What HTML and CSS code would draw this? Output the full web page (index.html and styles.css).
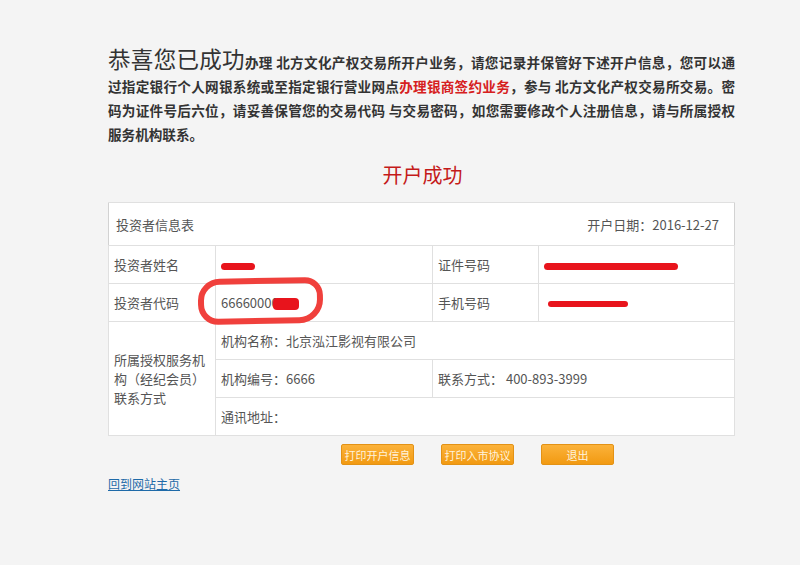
FILE: index.html
```html
<!DOCTYPE html>
<html lang="zh-CN">
<head>
    <meta charset="UTF-8">
    <title>开户成功</title>
    <link rel="stylesheet" href="styles.css">
</head>
<body>
    <div class="page">
        <p class="intro">
            <span class="intro-big">恭喜您已成功</span>办理 北方文化产权交易所开户业务，请您记录并保管好下述开户信息，您可以通过指定银行个人网银系统或至指定银行营业网点<span class="hl">办理银商签约业务</span>，参与 北方文化产权交易所交易。密码为证件号后六位，请妥善保管您的交易代码 与交易密码，如您需要修改个人注册信息，请与所属授权服务机构联系。
        </p>

        <h2 class="title">开户成功</h2>

        <table class="info">
            <colgroup>
                <col class="col1">
                <col class="col2">
                <col class="col3">
                <col class="col4">
            </colgroup>
            <tr class="info-head">
                <td colspan="2">投资者信息表</td>
                <td colspan="2" class="right">开户日期：2016-12-27</td>
            </tr>
            <tr>
                <td>投资者姓名</td>
                <td><span class="blot blot-name"></span></td>
                <td>证件号码</td>
                <td><span class="blot blot-id"></span></td>
            </tr>
            <tr>
                <td>投资者代码</td>
                <td class="mark-cell">66660000<span class="blot blot-code"></span><span class="circle"></span></td>
                <td>手机号码</td>
                <td><span class="blot blot-phone"></span></td>
            </tr>
            <tr>
                <td rowspan="3" class="multi">所属授权服务机构（经纪会员）联系方式</td>
                <td colspan="3">机构名称：北京泓江影视有限公司</td>
            </tr>
            <tr>
                <td>机构编号：6666</td>
                <td colspan="2">联系方式： 400-893-3999</td>
            </tr>
            <tr>
                <td colspan="3">通讯地址：</td>
            </tr>
        </table>

        <div class="actions">
            <button type="button" class="btn">打印开户信息</button>
            <button type="button" class="btn">打印入市协议</button>
            <button type="button" class="btn">退出</button>
        </div>

        <a href="#" class="home">回到网站主页</a>
    </div>
</body>
</html>
```

FILE: styles.css
```css
body {
    margin: 0;
    background: #f4f4f4;
    font-family: "Noto Sans CJK SC", "Liberation Sans", sans-serif;
    color: #555;
}
.page {
    width: 627px;
    margin-left: 108px;
    padding-top: 48px;
}
.intro {
    margin: 0;
    font-size: 13.6px;
    line-height: 24px;
    font-weight: bold;
    color: #333;
    text-align: justify;
}
.intro-big {
    font-size: 22.5px;
    line-height: 20px;
    font-weight: normal;
    color: #333;
}
.hl {
    color: #d62020;
}
.title {
    margin: 14px 0 0;
    text-align: center;
    font-size: 20px;
    line-height: 30px;
    font-weight: normal;
    color: #c41a1a;
    padding-left: 2px;
}
.info {
    margin-top: 12px;
    width: 627px;
    border-collapse: collapse;
    background: #fff;
    border: 1px solid #d2d2d2;
    font-size: 13px;
    table-layout: fixed;
}
.col1 { width: 107px; }
.col2 { width: 217px; }
.col3 { width: 106px; }
.info td {
    border: 1px solid #e0e0e0;
    height: 37px;
    padding: 0 5px;
    color: #555;
}
.info-head td {
    height: 42px;
    border-left: none;
    border-right: none;
    padding: 0 7px;
}
.info-head .right {
    text-align: right;
    padding-right: 15px;
}
.multi {
    line-height: 19px;
}
.mark-cell {
    position: relative;
}
.blot {
    display: inline-block;
    background: #e8141c;
    border-radius: 4px;
    vertical-align: middle;
}
.blot-name {
    width: 34px;
    height: 7px;
}
.blot-id {
    width: 134px;
    height: 7px;
}
.blot-code {
    width: 26px;
    height: 12px;
    margin-left: -6px;
}
.blot-phone {
    width: 80px;
    height: 6px;
    margin-left: 4px;
}
.circle {
    position: absolute;
    left: -18px;
    top: -6px;
    width: 113px;
    height: 34px;
    border: 6px solid #f0403c;
    border-radius: 22px 18px 24px 20px;
    transform: rotate(-1deg);
}
.actions {
    display: flex;
    gap: 27px;
    margin: 8px 0 0 233px;
}
.btn {
    width: 73px;
    height: 21px;
    padding: 0;
    border: 1px solid #e39215;
    border-radius: 2px;
    background: linear-gradient(to bottom, #fbb23a, #f29a12);
    color: #fff3dc;
    font-family: "Noto Sans CJK SC", sans-serif;
    font-size: 11px;
    white-space: nowrap;
    cursor: pointer;
}
.home {
    display: inline-block;
    margin-top: 10px;
    font-size: 12px;
    color: #1e6aa8;
}
```
